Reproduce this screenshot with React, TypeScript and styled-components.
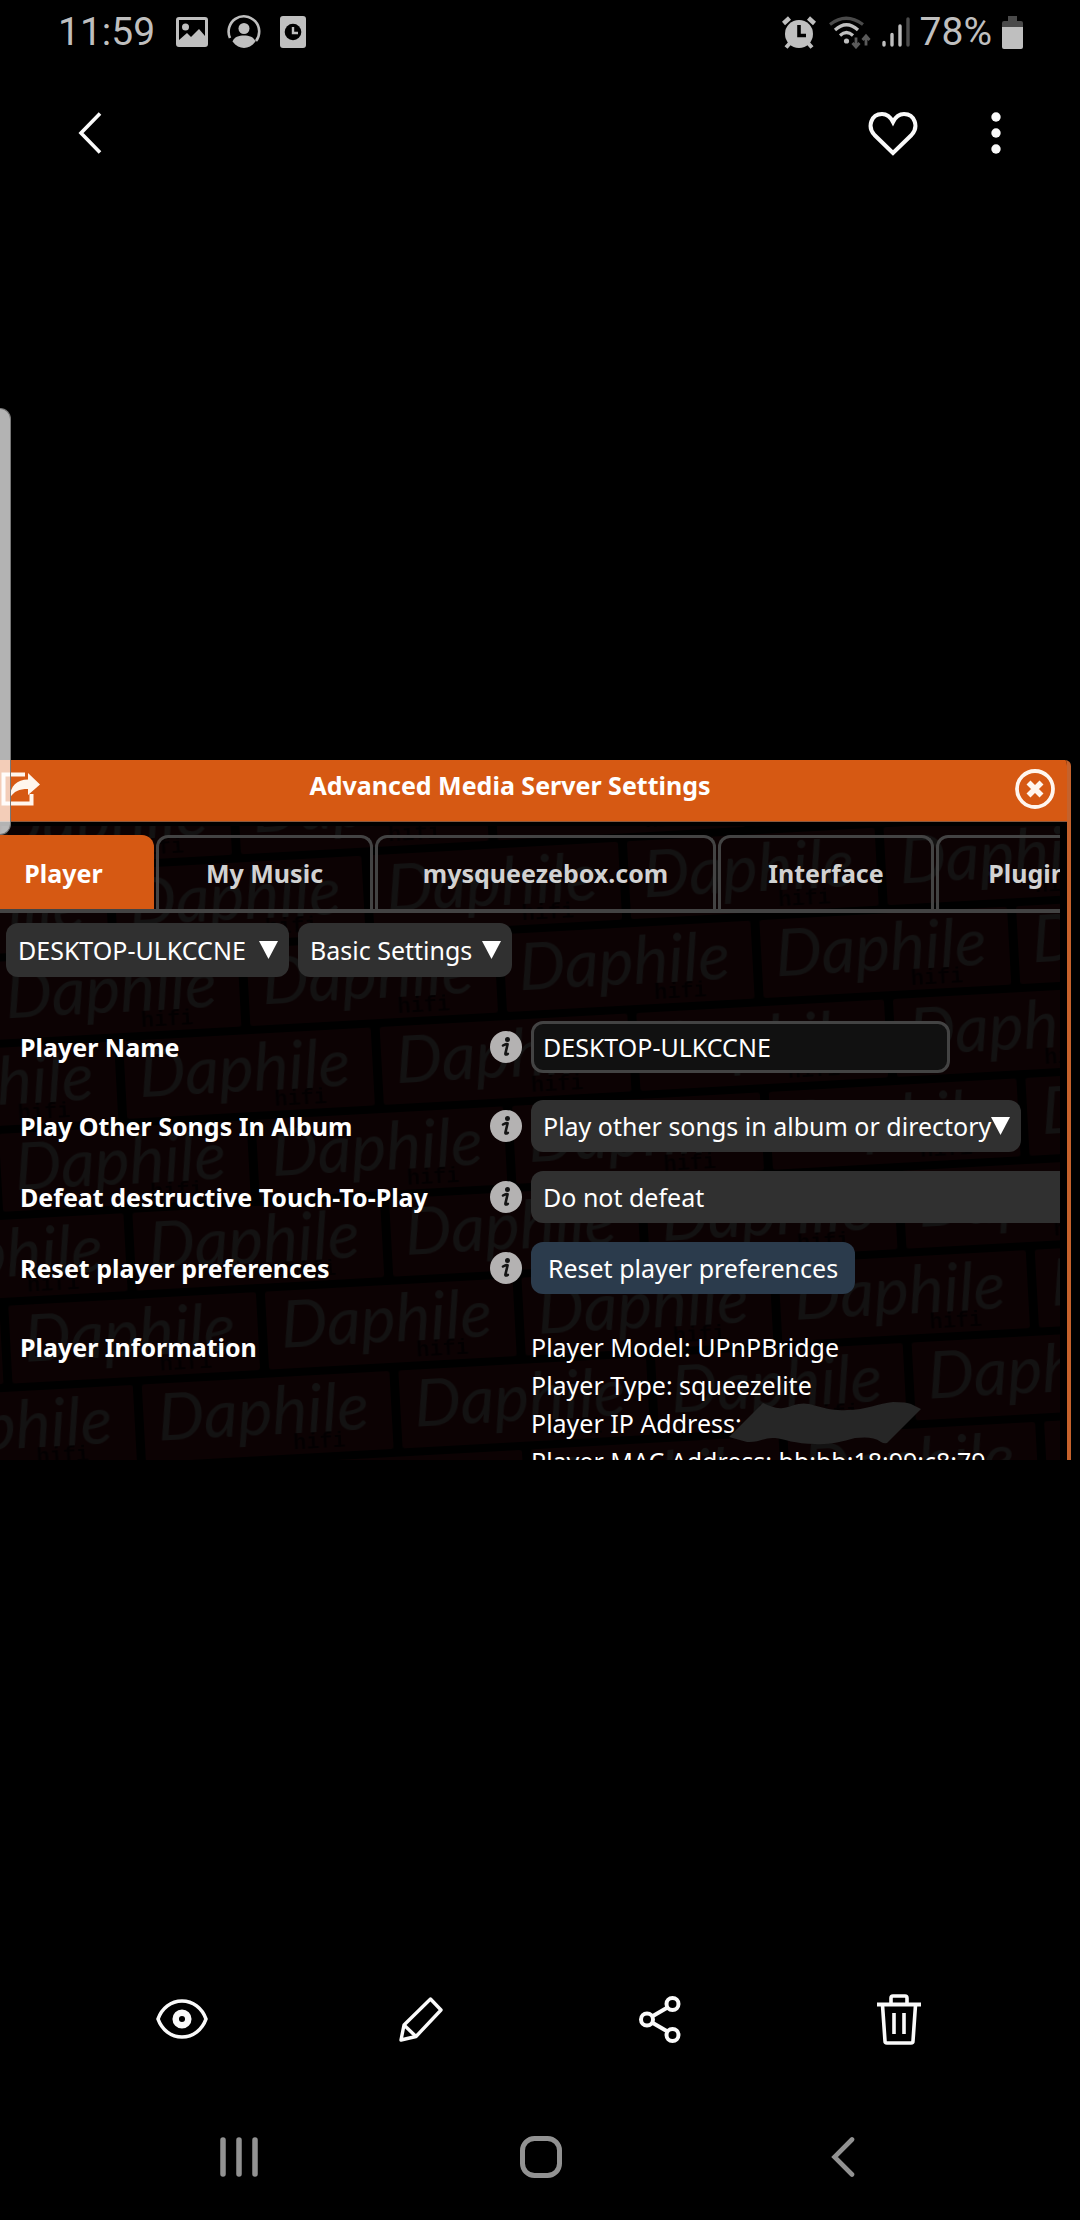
import React, { ReactNode } from "react";
import styled, { createGlobalStyle } from "styled-components";

const GlobalStyle = createGlobalStyle`
  *, *::before, *::after { box-sizing: border-box; }
  html, body { margin: 0; padding: 0; background: #000; }
  body, button, input, select { font-family: "Noto Sans", "Open Sans", sans-serif; }
  button { margin: 0; padding: 0; border: 0; background: none; color: inherit; cursor: pointer; }
  svg { display: block; flex: none; }
`;

const Screen = styled.div`
  position: relative;
  display: flex;
  flex-direction: column;
  min-height: 100vh;
  overflow: hidden;
  background: #000;
  color: #fff;
`;

const StatusBar = styled.header`
  display: flex;
  align-items: center;
  justify-content: space-between;
  height: 64px;
  padding: 0 57px 0 58px;
  color: #bfbfbf;
  font-family: Roboto, sans-serif;
  font-size: 39px;
  line-height: 66px;
`;

const StatusGroup = styled.div<{ $gap: number }>`
  display: flex;
  align-items: center;
  gap: ${(p) => p.$gap}px;
`;

const Clock = styled.time`
  margin-right: 2px;
`;

const ViewerBar = styled.nav`
  display: flex;
  align-items: center;
  justify-content: space-between;
  height: 138px;
  padding: 0 54px 0 60px;
`;

const ViewerActions = styled.div`
  display: flex;
  gap: 43px;
`;

const IconButton = styled.button`
  display: grid;
  place-items: center;
  width: 60px;
  height: 60px;
`;

const Viewer = styled.main`
  flex: 1;
  display: flex;
  flex-direction: column;
  justify-content: center;
  padding-top: 74px;
`;

const EdgeHandle = styled.div`
  position: absolute;
  top: 408px;
  left: 0;
  width: 11px;
  height: 427px;
  border: 1px solid #777;
  border-left: 0;
  border-radius: 0 14px 14px 0;
  background: rgba(255, 255, 255, 0.7);
`;

const Panel = styled.section`
  display: flex;
  flex-direction: column;
  height: 700px;
  margin-right: 9px;
  overflow: hidden;
  border-right: 4px solid #c4622c;
  border-top-right-radius: 6px;
`;

const PanelHeader = styled.header`
  display: flex;
  flex: none;
  align-items: center;
  height: 62px;
  margin-right: -4px;
  padding: 0 16px 4px 1px;
  border-bottom: 1px solid #8a5a40;
  background: #d65913;
`;

const PanelTitle = styled.h1`
  flex: 1;
  margin: 0;
  padding: 0 36px 8px 0;
  font-size: 25px;
  font-weight: 700;
  line-height: 36px;
  text-align: center;
`;

const PanelBody = styled.div`
  position: relative;
  flex: 1;
  min-height: 0;
  margin: 4px 7px 0 0;
  overflow: hidden;
`;

const Wall = styled.svg`
  position: absolute;
  inset: 0;
  width: 100%;
  height: 100%;
`;

const Content = styled.div`
  position: relative;
  padding-top: 9px;
`;

const Tabs = styled.div`
  display: flex;
  gap: 2px;
  border-bottom: 4px solid #434343;
`;

const Tab = styled.button<{ $active?: boolean; $width: number }>`
  flex: none;
  width: ${(p) => p.$width}px;
  height: 74px;
  border: ${(p) => (p.$active ? "0" : "3px solid #434343")};
  border-bottom: 0;
  border-radius: ${(p) => (p.$active ? "0 12px 0 0" : "12px 12px 0 0")};
  background: ${(p) => (p.$active ? "#d65913" : "transparent")};
  color: ${(p) => (p.$active ? "#fff" : "#d2d2d2")};
  padding: ${(p) => (p.$active ? "1px 27px 0 0" : "0 0 2px")};
  font-size: 25px;
  font-weight: 700;
  line-height: 36px;
`;

const Pickers = styled.div`
  display: flex;
  gap: 9px;
  padding: 10px 6px 0;
`;

const SelectBox = styled.div<{ $width: number }>`
  display: grid;
  flex: none;
  align-items: center;
  width: ${(p) => p.$width}px;
  > * { grid-area: 1 / 1; }
  > svg { justify-self: end; margin-right: 11px; pointer-events: none; }
`;

const Select = styled.select<{ $tall?: boolean }>`
  appearance: none;
  width: 100%;
  height: ${(p) => (p.$tall ? 54 : 52)}px;
  padding: 0 12px;
  border: 0;
  border-radius: 12px;
  background: #303030;
  color: #fff;
  font-size: 25px;
`;

const Form = styled.form`
  padding-left: 20px;
`;

const Row = styled.div<{ $above: number }>`
  display: grid;
  grid-template-columns: 470px 41px auto;
  align-items: center;
  justify-content: start;
  margin-top: ${(p) => p.$above}px;
`;

const Label = styled.label`
  font-size: 25px;
  font-weight: 700;
  line-height: 38px;
`;

const InfoRow = styled(Row)`
  align-items: start;
`;

const Facts = styled.div`
  grid-column: 3;
  font-size: 25px;
  line-height: 38px;
  white-space: nowrap;
`;

const Fact = styled.div`
  display: flex;
`;

const Redaction = styled.svg`
  margin: -2px 0 -3px -13px;
`;

const TextInput = styled.input`
  width: 419px;
  height: 52px;
  padding: 0 9px;
  border: 3px solid #434343;
  border-radius: 12px;
  background: #111;
  color: #fff;
  font-size: 25px;
`;

const ResetButton = styled.button`
  height: 52px;
  width: 324px;
  border-radius: 12px;
  background: #2b3b4c;
  color: #fff;
  font-size: 25px;
`;

const Toolbar = styled.nav`
  display: grid;
  grid-template-columns: repeat(4, 1fr);
  place-items: center;
  height: 150px;
  padding: 0 62px;
`;

const SystemNav = styled.nav`
  display: grid;
  grid-template-columns: repeat(3, 1fr);
  place-items: center;
  height: 126px;
  padding: 0 86px 0 88px;
  color: #929292;
`;

const Triangle = () => (
  <svg width="19" height="18" viewBox="0 0 19 18" aria-hidden="true">
    <path d="M0 0H19L9.500 18Z" fill="#fff" />
  </svg>
);

const InfoIcon = () => (
  <svg width="32" height="32" viewBox="0 0 32 32" aria-hidden="true">
    <circle cx="16" cy="16" r="16" fill="#b4b2b2" />
    <circle cx="17.500" cy="8.500" r="2.500" fill="#151515" />
    <path d="M13 14.500c2-1.200 3.600-1.600 4.600-1.200l-2.200 9.200c-.2 1.500 1 1.200 2.400.3" fill="none" stroke="#151515" strokeWidth="2.600" strokeLinecap="round" strokeLinejoin="round" />
  </svg>
);

const InfoButton = ({ topic }: { topic: string }) => (
  <button type="button" aria-label={`About ${topic}`}>
    <InfoIcon />
  </button>
);

const Brick = ({ x, y }: { x: number; y: number }) => (
  <g transform={`translate(${x} ${y})`}>
    <rect width="248" height="78" rx="3" fill="#0c0203" />
    <text x="14" y="57" fontFamily="Lato, sans-serif" fontStyle="italic" fontWeight="400" fontSize="66" fill="#131212">
      Daphile
    </text>
    <text x="148" y="73" fontFamily="Liberation Mono, monospace" fontWeight="700" fontSize="22" fill="#030001">
      hifi
    </text>
  </g>
);

const BrickWall = () => (
  <Wall aria-hidden="true">
    <defs>
      <pattern id="bricks" width="257" height="172" patternUnits="userSpaceOnUse" patternTransform="translate(123 215) rotate(-3.12)">
        <rect width="257" height="172" fill="#000" />
        <Brick x={0} y={0} />
        <Brick x={-129} y={86} />
        <Brick x={128} y={86} />
      </pattern>
    </defs>
    <rect width="100%" height="100%" fill="url(#bricks)" />
  </Wall>
);

const StatusIcons = () => (
  <>
    <svg width="32" height="30" viewBox="0 0 32 30" aria-hidden="true">
      <path fillRule="evenodd" fill="currentColor" d="M3 0H29Q32 0 32 3V27Q32 30 29 30H3Q0 30 0 27V3Q0 0 3 0ZM3 3V23L11 16L15 20L23 12L29 19V3Z" />
      <circle cx="9.500" cy="10" r="3.500" fill="currentColor" />
    </svg>
    <svg width="34" height="34" viewBox="0 0 34 34" aria-hidden="true">
      <path d="M3 23A15.300 15.300 0 1 1 29 26" fill="none" stroke="currentColor" strokeWidth="2.600" />
      <circle cx="17" cy="13.500" r="5.500" fill="currentColor" />
      <path d="M5.500 26.500C7 22 12 20.500 17 20.500S27 22 28.500 26.500C25 31 21 33 17 33S9 31 5.500 26.500Z" fill="currentColor" />
    </svg>
  </>
);

const Redacted = () => (
  <Redaction width="192" height="43" viewBox="0 0 192 43" aria-label="hidden">
    <path
      fill="#262626"
      d="M0 35L34 1C41 4 47 7 54 6C64 4 70 0 80 2C96 6 104 9 118 8C137 8 150 1 164 0Q178 0 182 2L192 7L158 41Q155 42 152 40C145 35 137 35 126 36C112 40 98 43 86 42C66 42 55 37 46 36C36 35 29 41 18 40Z"
    />
  </Redaction>
);

const Picker = ({ id, value, width, tall }: { id: string; value: string; width: number; tall?: boolean }) => (
  <SelectBox $width={width}>
    <Select id={id} aria-label={tall ? id : undefined} $tall={tall} defaultValue={value}>
      <option>{value}</option>
    </Select>
    <Triangle />
  </SelectBox>
);

const Field = ({ id, title, above, children }: { id: string; title: string; above: number; children: ReactNode }) => (
  <Row $above={above}>
    <Label htmlFor={id}>{title}</Label>
    <InfoButton topic={title} />
    {children}
  </Row>
);

export default function App() {
  return (
    <Screen>
      <GlobalStyle />
      <StatusBar>
        <StatusGroup $gap={19}>
          <Clock>11:59</Clock>
          <StatusIcons />
          <svg width="26" height="32" viewBox="0 0 26 32" aria-hidden="true">
            <rect width="26" height="32" rx="3" fill="currentColor" />
            <circle cx="13" cy="16" r="8.300" fill="#000" />
            <path d="M13 11V17H18" fill="none" stroke="currentColor" strokeWidth="2.400" />
          </svg>
        </StatusGroup>
        <StatusGroup $gap={10}>
          <svg width="90" height="33" viewBox="0 0 90 33" aria-hidden="true">
            <g fill="none" stroke="currentColor">
              <circle cx="17" cy="18" r="14" fill="currentColor" stroke="none" />
              <path d="M1.500 7.500L7.500 2M26.500 2L32.500 7.500" strokeWidth="4.500" />
              <path d="M8 27L4 31.500M26 27L30 31.500" strokeWidth="4" />
              <path d="M17 9V19.500H24" stroke="#000" strokeWidth="3.600" />
              <path d="M48 8.500Q64 -4 81 8.500" stroke="#4a4a4a" strokeWidth="3.200" />
              <path d="M53 14Q64.500 3.500 76 14" strokeWidth="3.200" />
              <path d="M58 19.500Q64.500 13.500 71 19.500" strokeWidth="3.200" />
              <circle cx="64.500" cy="25" r="2.600" fill="currentColor" stroke="none" />
              <path d="M74 21.500V31M70.500 27L74 31L77.500 27M84 29.500V20M80.500 24L84 20L87.500 24" stroke="#5a5a5a" strokeWidth="2.800" />
            </g>
          </svg>
          <svg width="28" height="30" viewBox="0 0 28 30" aria-hidden="true">
            <g stroke="currentColor" strokeWidth="3.400" strokeLinecap="round">
              <path d="M2 25.500V28M10 17.500V28M18 9V28" />
              <path d="M26 2V28" stroke="#4a4a4a" />
            </g>
          </svg>
          <span>78%</span>
          <svg width="21" height="33" viewBox="0 0 21 33" aria-hidden="true">
            <path d="M6 0H15V5H19Q21 5 21 7V12H0V7Q0 5 2 5H6Z" fill="#4a4a4a" />
            <path d="M0 11H21V31Q21 33 19 33H2Q0 33 0 31Z" fill="currentColor" />
          </svg>
        </StatusGroup>
      </StatusBar>

      <ViewerBar>
        <IconButton aria-label="Back">
          <svg width="24" height="42" viewBox="0 0 24 42" fill="none" stroke="#fafafa" strokeWidth="3.600">
            <path d="M22 1.500L3 21L22 40.500" />
          </svg>
        </IconButton>
        <ViewerActions>
          <IconButton aria-label="Favourite">
            <svg width="50" height="45" viewBox="0 0 50 45" fill="none" stroke="#fafafa" strokeWidth="4">
              <path d="M25 42L6.500 24C-1 16 3 3 14 3C20 3 23 7 25 11C27 7 30 3 36 3C47 3 51 16 43.500 24Z" />
            </svg>
          </IconButton>
          <IconButton aria-label="More options">
            <svg width="10" height="42" viewBox="0 0 10 42" fill="#fafafa">
              <circle cx="5" cy="5" r="4.700" />
              <circle cx="5" cy="21" r="4.700" />
              <circle cx="5" cy="37" r="4.700" />
            </svg>
          </IconButton>
        </ViewerActions>
      </ViewerBar>

      <Viewer>
        <Panel>
          <PanelHeader>
            <button aria-label="Open in new window">
              <svg width="40" height="34" viewBox="0 0 40 34">
                <path d="M24 2.500H2.500V31.500H30.500V22" fill="none" stroke="#fff6ee" strokeWidth="4" />
                <path d="M27 1L39 12.500L27 23V17C18 17 13 19 9 26C9 14 16 7.500 27 7.500Z" fill="#fff6ee" />
              </svg>
            </button>
            <PanelTitle>Advanced Media Server Settings</PanelTitle>
            <button aria-label="Close">
              <svg width="40" height="40" viewBox="0 0 40 40" fill="none" stroke="#fff6ee">
                <circle cx="20" cy="20" r="18" strokeWidth="3.800" />
                <path d="M13.500 13.500L26.500 26.500M26.500 13.500L13.500 26.500" strokeWidth="5.600" />
              </svg>
            </button>
          </PanelHeader>
          <PanelBody>
            <BrickWall />
            <Content>
              <Tabs role="tablist">
                <Tab role="tab" aria-selected="true" $active $width={154}>Player</Tab>
                <Tab role="tab" $width={217}>My Music</Tab>
                <Tab role="tab" $width={341}>mysqueezebox.com</Tab>
                <Tab role="tab" $width={216}>Interface</Tab>
                <Tab role="tab" $width={196}>Plugins</Tab>
              </Tabs>
              <Pickers>
                <Picker id="device" value="DESKTOP-ULKCCNE" width={283} tall />
                <Picker id="section" value="Basic Settings" width={214} tall />
              </Pickers>
              <Form onSubmit={(e) => e.preventDefault()}>
                <Field id="name" title="Player Name" above={44}>
                  <TextInput id="name" defaultValue="DESKTOP-ULKCCNE" />
                </Field>
                <Field id="album" title="Play Other Songs In Album" above={27}>
                  <Picker id="album" value="Play other songs in album or directory" width={490} />
                </Field>
                <Field id="defeat" title="Defeat destructive Touch-To-Play" above={19}>
                  <Picker id="defeat" value="Do not defeat" width={700} />
                </Field>
                <Field id="reset" title="Reset player preferences" above={19}>
                  <ResetButton id="reset" type="button">Reset player preferences</ResetButton>
                </Field>
                <InfoRow $above={34}>
                  <Label as="span">Player Information</Label>
                  <Facts>
                    <Fact>Player Model: UPnPBridge</Fact>
                    <Fact>Player Type: squeezelite</Fact>
                    <Fact>Player IP Address: <Redacted /></Fact>
                    <Fact>Player MAC Address: bb:bb:18:99:c8:79</Fact>
                  </Facts>
                </InfoRow>
              </Form>
            </Content>
          </PanelBody>
        </Panel>
      </Viewer>

      <Toolbar>
        <IconButton aria-label="View">
          <svg width="52" height="40" viewBox="0 0 52 40" fill="none" stroke="#fafafa">
            <path d="M2 20C6 9 15 2 26 2S46 9 50 20C46 31 37 38 26 38S6 31 2 20Z" strokeWidth="3.600" strokeLinejoin="round" />
            <circle cx="26" cy="20" r="6.300" strokeWidth="6.500" />
          </svg>
        </IconButton>
        <IconButton aria-label="Edit">
          <svg width="44" height="45" viewBox="0 0 44 45" fill="none" stroke="#fafafa" strokeWidth="3.400" strokeLinejoin="round">
            <path d="M31.500 2L42 13L17 39.500L2 43L5 28Z" />
            <path d="M5 28L17 39.500" />
          </svg>
        </IconButton>
        <IconButton aria-label="Share">
          <svg width="42" height="47" viewBox="0 0 42 47" fill="none" stroke="#fafafa" strokeWidth="4">
            <circle cx="8" cy="23.500" r="6" />
            <circle cx="33.500" cy="8" r="6" />
            <circle cx="33.500" cy="39" r="6" />
            <path d="M13 20.500L28.500 11.500M13 26.500L28.500 35.500" />
          </svg>
        </IconButton>
        <IconButton aria-label="Delete">
          <svg width="44" height="51" viewBox="0 0 44 51" fill="none" stroke="#fafafa" strokeWidth="3.600">
            <path d="M0 10.500H44" strokeWidth="4" />
            <path d="M14 10V4Q14 2 16 2H28Q30 2 30 4V10" />
            <path d="M5.500 11L8 47Q8 49 10 49H34Q36 49 36 47L38.500 11" />
            <path d="M17 19V40M27 19V40" />
          </svg>
        </IconButton>
      </Toolbar>

      <SystemNav>
        <IconButton aria-label="Recent apps">
          <svg width="38" height="40" viewBox="0 0 38 40" stroke="currentColor" strokeWidth="5.500" strokeLinecap="round">
            <path d="M3 3V37M19 3V37M35 3V37" />
          </svg>
        </IconButton>
        <IconButton aria-label="Home">
          <svg width="42" height="42" viewBox="0 0 42 42" fill="none" stroke="currentColor" strokeWidth="5">
            <rect x="2.500" y="2.500" width="37" height="37" rx="12" />
          </svg>
        </IconButton>
        <IconButton aria-label="Back">
          <svg width="24" height="40" viewBox="0 0 24 40" fill="none" stroke="currentColor" strokeWidth="4.600" strokeLinecap="round">
            <path d="M21 2.500L3.500 20L21 37.500" />
          </svg>
        </IconButton>
      </SystemNav>
      <EdgeHandle />
    </Screen>
  );
}
